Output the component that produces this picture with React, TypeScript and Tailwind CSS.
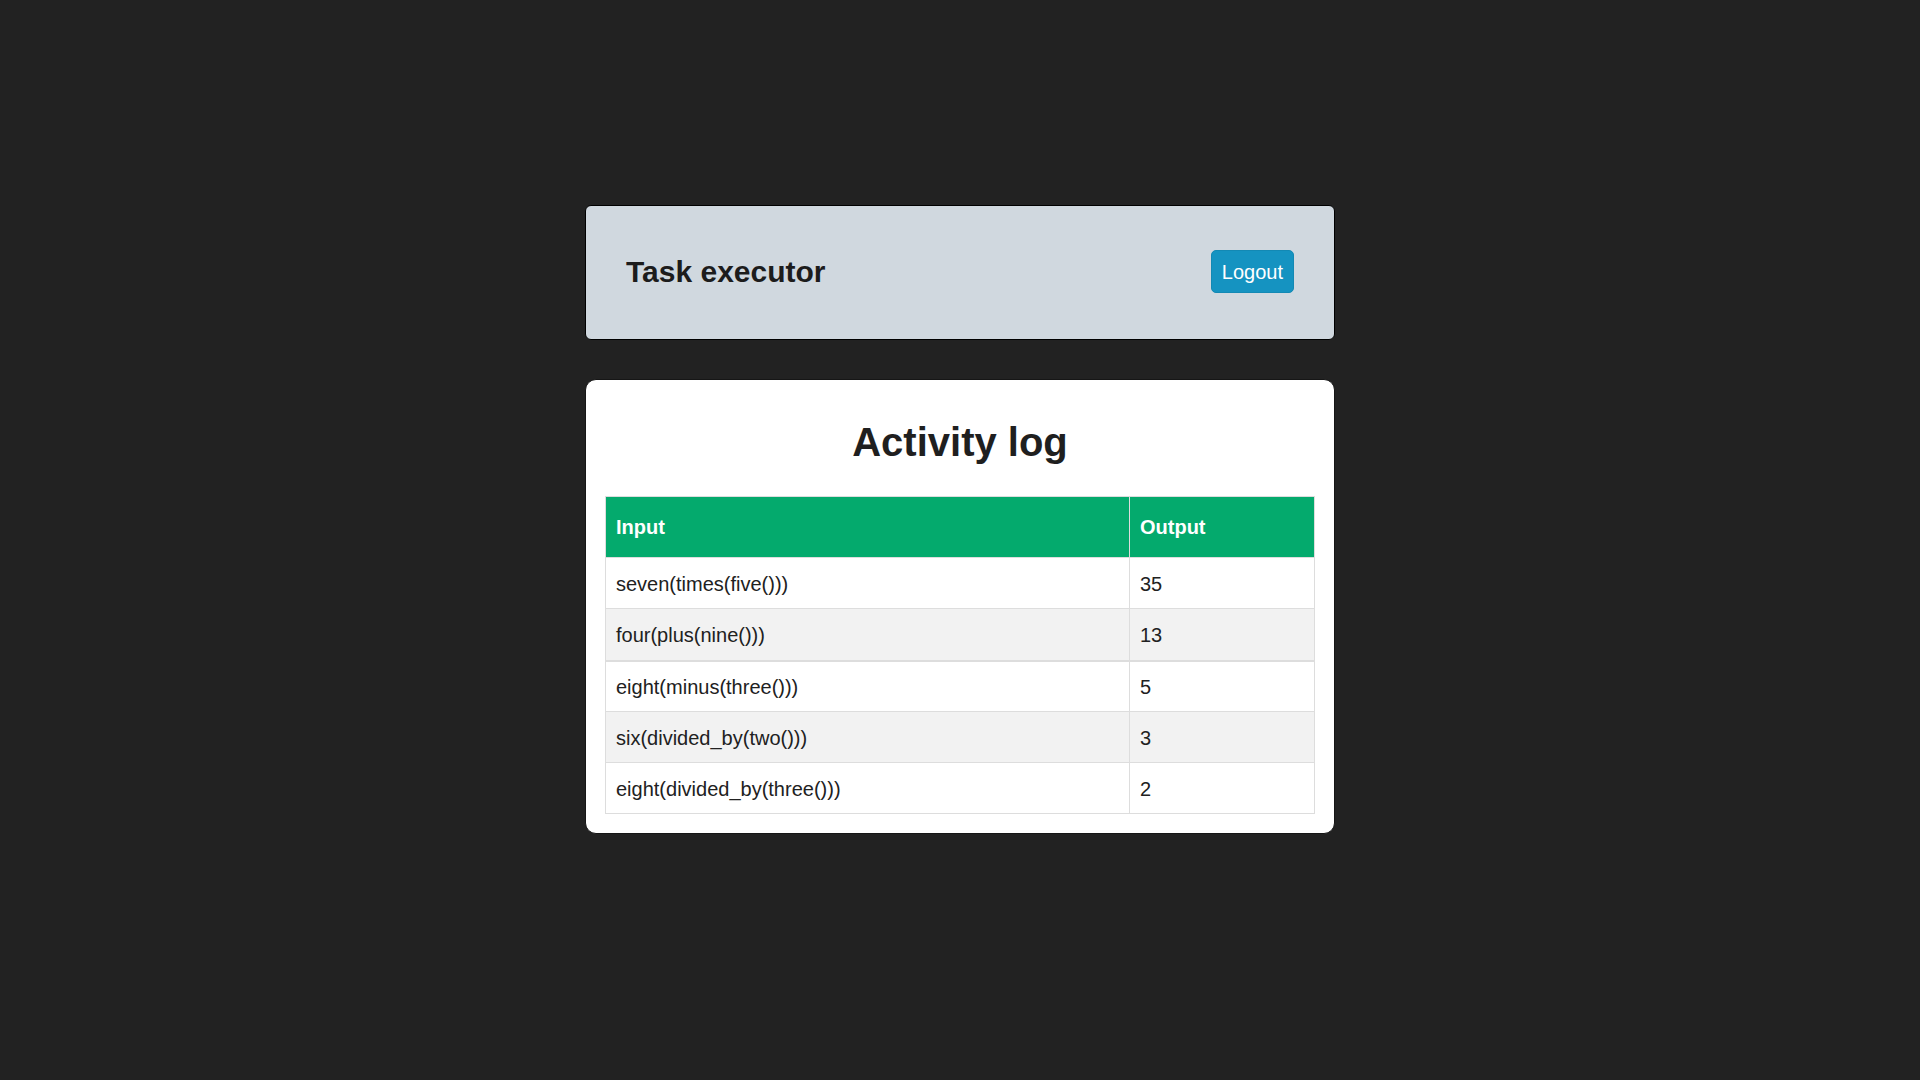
import React from 'react';

interface LogEntry {
  input: string;
  output: string;
}

const entries: LogEntry[] = [
  { input: 'seven(times(five()))', output: '35' },
  { input: 'four(plus(nine()))', output: '13' },
  { input: 'eight(minus(three()))', output: '5' },
  { input: 'six(divided_by(two()))', output: '3' },
  { input: 'eight(divided_by(three()))', output: '2' },
];

export default function App() {
  return (
    <div
      className="min-h-screen bg-[#222222] pt-[205px] text-[#212121]"
      style={{ fontFamily: '"Liberation Sans", Arial, sans-serif' }}
    >
      <div className="mx-auto flex w-[750px] flex-col gap-[39px]">
        {/* header */}
        <div className="flex h-[135px] items-center justify-between rounded-[6px] border border-black bg-[#d0d8df] px-[40px] pb-[2px]">
          <h2 className="text-[30px] leading-none font-bold text-[#1c1c1c]">Task executor</h2>
          <button className="h-[43px] rounded-[5px] border border-[#1389b4] bg-[#1593c1] px-[10px] text-[20px] leading-none text-white">
            Logout
          </button>
        </div>

        {/* activity log */}
        <div className="rounded-[11px] border border-[#161616] bg-white px-[19px] pt-[40px] pb-[19px]">
          <h1 className="mb-[31px] text-center text-[40px] leading-[45px] font-bold text-[#1f1f1f]">
            Activity log
          </h1>
          <table className="w-full border-collapse border border-[#dddddd] text-[20px] leading-none">
            <thead>
              <tr className="h-[61px] bg-[#04aa6d] text-white">
                <th className="w-[524px] border border-[#dddddd] px-[10px] text-left font-bold">Input</th>
                <th className="border border-[#dddddd] px-[10px] text-left font-bold">Output</th>
              </tr>
            </thead>
            <tbody>
              {entries.map((e, i) => (
                <tr
                  key={i}
                  className={
                    (i % 2 === 1 ? 'bg-[#f2f2f2] ' : 'bg-white ') +
                    (i === 1 ? 'h-[52px] border-b-2 border-[#dddddd]' : 'h-[51px]')
                  }
                >
                  <td className="border-x border-t border-[#dddddd] px-[10px] pt-[1px]">{e.input}</td>
                  <td className="border-x border-t border-[#dddddd] px-[10px] pt-[1px]">{e.output}</td>
                </tr>
              ))}
            </tbody>
          </table>
        </div>
      </div>
    </div>
  );
}
